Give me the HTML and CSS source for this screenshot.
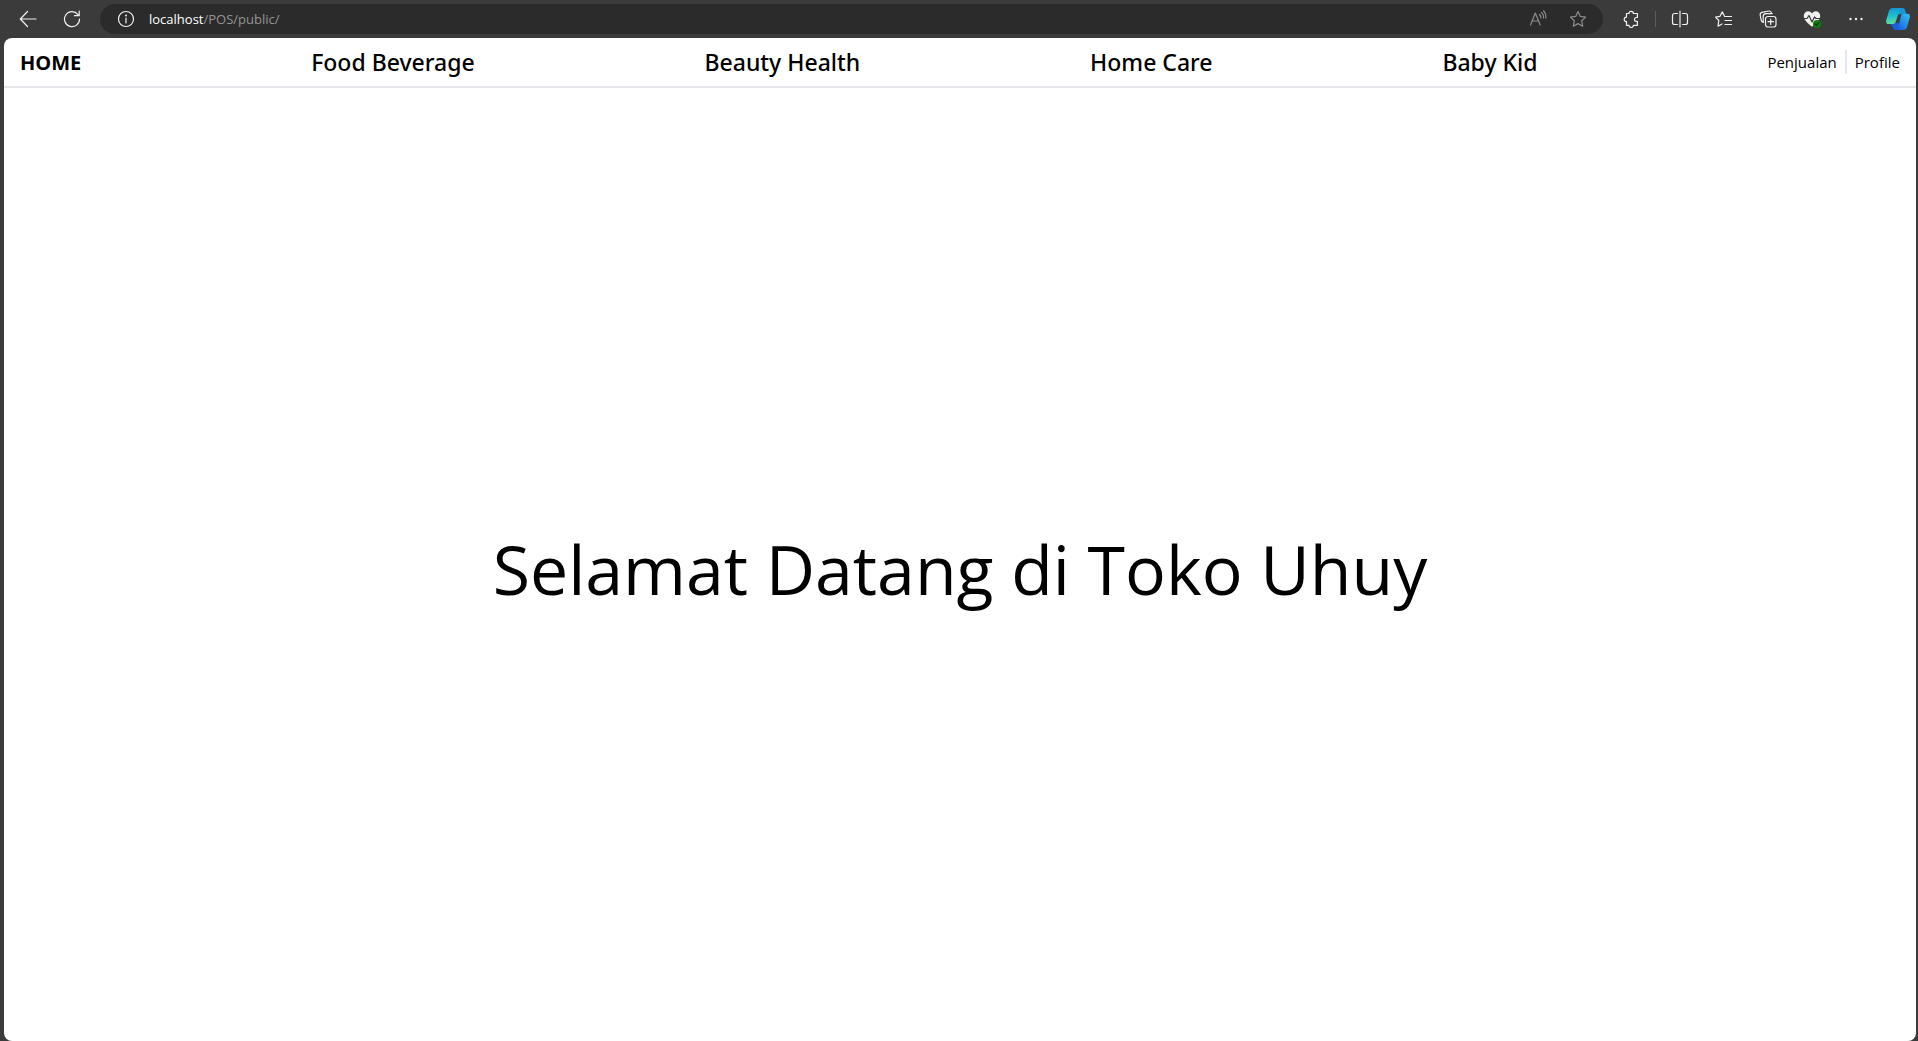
FILE: index.html
```html
<!DOCTYPE html>
<html lang="id">
<head>
<meta charset="utf-8">
<meta name="viewport" content="width=device-width, initial-scale=1">
<title>Toko Uhuy</title>
<link rel="stylesheet" href="styles.css">
</head>
<body>
<header class="toolbar">
  <button class="tool" type="button" aria-label="Back"><svg width="18" height="18" viewBox="0 0 18 18"><path d="M17 9H1.500M8.500 1.500L1.300 9l7.200 7.500"/></svg></button>
  <button class="tool" type="button" aria-label="Refresh"><svg width="18" height="18" viewBox="0 0 18 18"><path d="M16.500 9A7.500 7.500 0 1 1 14.800 4.400L16 5.500M16.200 1v4.700h-4.700"/></svg></button>
  <div class="address">
    <button class="tool tool-small" type="button" aria-label="Site information"><svg width="18" height="18" viewBox="0 0 18 18"><circle cx="9" cy="9" r="7.500"/><path d="M9 8v5"/><circle class="dot" cx="9" cy="5.500" r="1"/></svg></button>
    <label class="host" for="url">localhost</label>
    <input class="path" id="url" type="text" value="/POS/public/" spellcheck="false">
    <button class="tool tool-small tool-dim" type="button" aria-label="Read aloud"><svg width="18" height="18" viewBox="0 0 18 18"><path d="M1.500 15L6.300 3 11.200 15M3 11h6.700M10.500 4.500q1.500 1.500 1.300 3.500M12.500 2.500q2.400 2 2 5.500M14.500.8q2.800 2.600 2.300 7.200"/></svg></button>
    <button class="tool tool-small tool-dim" type="button" aria-label="Add to favorites"><svg width="18" height="18" viewBox="0 0 18 18"><path d="M9 1.500l2.300 4.900 5.300.7-3.900 3.700 1 5.400L9 13.600l-4.700 2.600 1-5.400L1.400 7.100l5.300-.7z"/></svg></button>
  </div>
  <button class="tool" type="button" aria-label="Extensions"><svg width="18" height="18" viewBox="0 0 18 18"><path d="M4.500 3.500H7a2.200 2.200 0 0 1 4.400 0h4v4h-1a1.900 1.900 0 0 0 0 3.800h1v4h-4a2.200 2.200 0 0 1-4.400 0H4.500v-3.600a2.300 2.300 0 0 1 0-4.600z"/></svg></button>
  <span class="rule"></span>
  <button class="tool" type="button" aria-label="Split screen"><svg width="18" height="18" viewBox="0 0 18 18"><path d="M6.500 3.500h-3a2 2 0 0 0-2 2v7a2 2 0 0 0 2 2h3M11.500 3.500h3a2 2 0 0 1 2 2v7a2 2 0 0 1-2 2h-3"/><path d="M9 1v16"/></svg></button>
  <button class="tool" type="button" aria-label="Favorites"><svg width="18" height="18" viewBox="0 0 18 18"><path d="M16.500 6.500h-5L9.500 6.300 7.300 1.800 5 6.300l-4.500.8 3.300 3.400-.8 5.700 4-2.200M10 10.500h6.500M10 14.500h6.500"/></svg></button>
  <button class="tool" type="button" aria-label="Collections"><svg width="18" height="18" viewBox="0 0 18 18"><path d="M4.500 12.500q-1.800-.2-2.300-2.200L1.200 5q-.3-2 1.700-2.600l7-1.400q2-.2 2.700 2.200M4.200 12.200V6.500q0-2.500 2.500-2.800h6.500"/><rect x="6.500" y="6.500" width="10.500" height="10.500" rx="2.500"/><path d="M11.700 9v5.500M9 11.700h5.500"/></svg></button>
  <button class="tool" type="button" aria-label="Browser essentials"><svg width="18" height="18" viewBox="0 0 18 18"><path class="heart" d="M9 3.500C6.500-.5.500 1.200.8 6.300.9 10 5 13.500 9 16.800c4-3.300 8.100-6.800 8.200-10.500C17.500 1.200 11.500-.5 9 3.500z"/><path class="pulse" d="M0 8.500h4L6 5.500l3 6.500 2.500-5 1.500 1.500h5"/><circle class="ok" cx="14" cy="14" r="4"/><path class="tick" d="M12 14l1.500 1.500L16 12.700"/></svg></button>
  <button class="tool" type="button" aria-label="Settings and more"><svg width="18" height="18" viewBox="0 0 18 18"><circle class="dot" cx="3.500" cy="9" r="1.200"/><circle class="dot" cx="9" cy="9" r="1.200"/><circle class="dot" cx="14.500" cy="9" r="1.200"/></svg></button>
  <button class="tool tool-small" type="button" aria-label="Copilot"><svg class="copilot" width="24" height="22" viewBox="0 0 24 22">
    <defs>
      <linearGradient id="left" x1="0" y1="0" x2="0" y2="1"><stop offset="0" stop-color="#1497d5"/><stop offset=".5" stop-color="#20bfd0"/><stop offset="1" stop-color="#5bdf96"/></linearGradient>
      <linearGradient id="right" x1="0" y1="1" x2="1" y2="0"><stop offset="0" stop-color="#1750dc"/><stop offset=".5" stop-color="#238ded"/><stop offset="1" stop-color="#30c3ed"/></linearGradient>
    </defs>
    <path fill="#1b5fd4" d="M4 15h9l1 5.200Q12.700 22 10.500 22H9q-1.500 0-2-2z"/>
    <path fill="#1597d8" d="M9 0h7.500q2 0 2.600 2l1.200 4h-5L9 7z"/>
    <path fill="url(#left)" d="M6.500 0h9q-1.500.5-2 2.200L9.800 13.700Q9 16 6.800 16H2.700Q-.5 16 .2 12.200L3 2.800Q4 0 6.500 0z"/>
    <path fill="url(#right)" d="M16.500 5.800h4.900q3 0 2.400 3.400L21 19Q20.200 22 17.200 22H9.500q2-.3 2.700-2.500l2.800-11.500q.4-2.200 1.500-2.200z"/>
  </svg></button>
</header>
<div class="page">
  <nav class="nav">
    <a class="brand" href="#">HOME</a>
    <a class="category" href="#">Food Beverage</a>
    <a class="category" href="#">Beauty Health</a>
    <a class="category" href="#">Home Care</a>
    <a class="category" href="#">Baby Kid</a>
    <div class="account">
      <a class="account-link" href="#">Penjualan</a>
      <a class="account-link" href="#">Profile</a>
    </div>
  </nav>
  <main class="hero"><h1 class="welcome">Selamat Datang di Toko Uhuy</h1></main>
</div>
</body>
</html>
```
FILE: styles.css
```css
* {
  box-sizing: border-box;
}

body {
  margin: 0;
  min-height: 100vh;
  display: flex;
  flex-direction: column;
  background: #3b3b3b;
  color: #000;
  font-family: "Open Sans", "Noto Sans", sans-serif;
}

/* Browser toolbar */
.toolbar {
  display: flex;
  align-items: center;
  height: 38px;
  padding-left: 6px;
}

.tool {
  display: flex;
  align-items: center;
  justify-content: center;
  flex: none;
  width: 44px;
  height: 30px;
  padding: 0;
  border: 0;
  background: none;
  color: #f0f0f0;
}

.tool-small {
  width: 40px;
}

.tool-dim {
  color: #8c8c8c;
}

.tool svg {
  fill: none;
  stroke: currentColor;
  stroke-width: 1.2;
  stroke-linejoin: round;
  stroke-linecap: round;
}

.tool .dot,
.tool .heart {
  fill: currentColor;
  stroke: none;
}

.tool .pulse {
  stroke: #3b3b3b;
}

.tool .ok {
  fill: #107c10;
  stroke: none;
}

.tool .tick {
  stroke: #0a3d0a;
}

.tool .copilot {
  stroke: none;
}

.address {
  display: flex;
  align-items: center;
  flex: 1;
  height: 30px;
  margin: 0 6px;
  padding: 0 5px 0 6px;
  border-radius: 15px;
  background: #2b2b2b;
  font-size: 13px;
}

.host {
  margin-left: 3px;
  color: #fff;
}

.path {
  flex: 1;
  min-width: 0;
  padding: 0;
  border: 0;
  outline: 0;
  background: none;
  color: #949494;
  font: inherit;
}

.rule {
  width: 1px;
  height: 16px;
  margin: 0 2px;
  background: #5c5c5c;
}

/* Store page */
.page {
  flex: 1;
  display: flex;
  flex-direction: column;
  margin: 0 2px 0 4px;
  border-radius: 8px;
  background: #fff;
}

.nav {
  display: flex;
  align-items: center;
  justify-content: space-between;
  height: 50px;
  padding: 0 16px;
  border-bottom: 2px solid #e5e7eb;
}

.nav a {
  color: inherit;
  text-decoration: none;
}

.brand {
  font-size: 20px;
  font-weight: 700;
}

.category {
  font-family: "Noto Sans", "Open Sans", sans-serif;
  font-size: 23px;
  font-weight: 500;
}

.account {
  display: flex;
}

.account-link {
  font-size: 15px;
  line-height: 24px;
}

.account-link + .account-link {
  margin-left: 8px;
  padding-left: 8px;
  border-left: 2px solid #e5e7eb;
}

.hero {
  flex: 1;
  display: flex;
  align-items: center;
  justify-content: center;
  padding-top: 8px;
}

.welcome {
  margin: 0;
  font-size: 68px;
  font-weight: 400;
  line-height: 1;
}
```
